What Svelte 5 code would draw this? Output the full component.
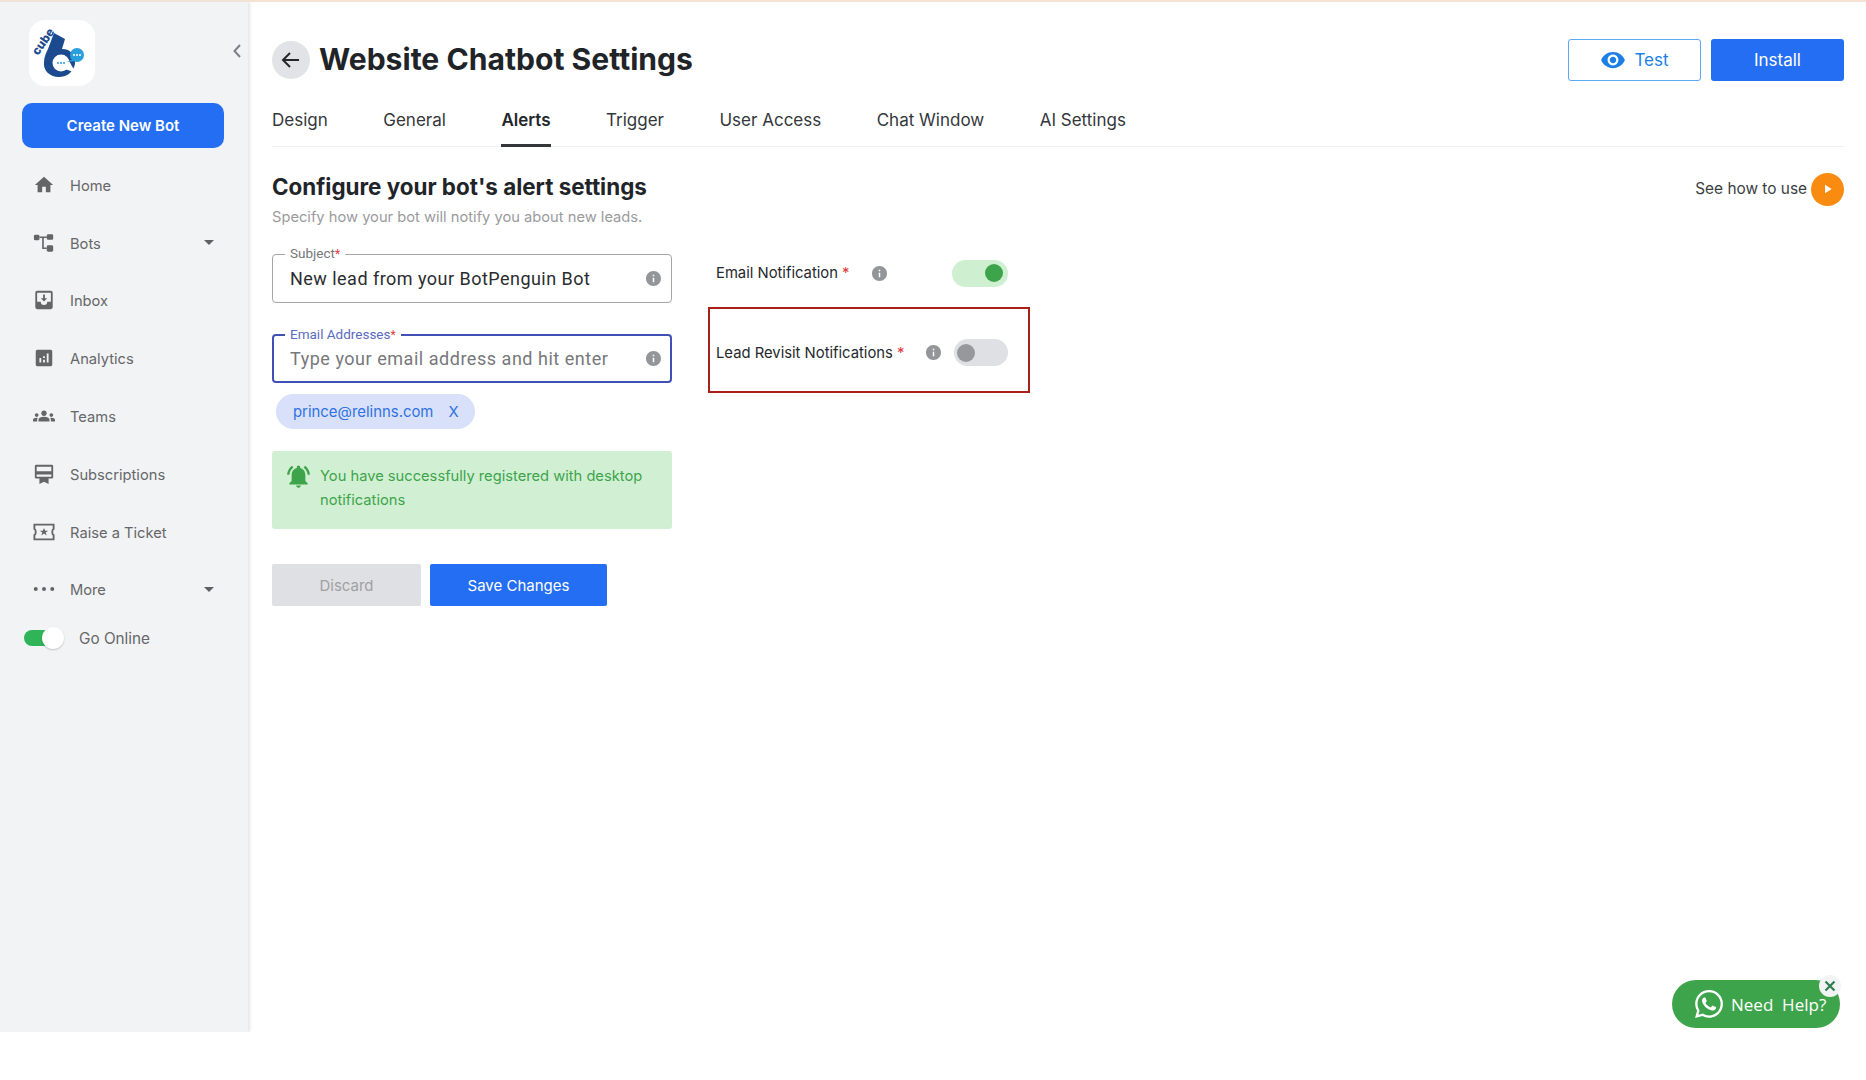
<script>
	const tabs = ["Design", "General", "Alerts", "Trigger", "User Access", "Chat Window", "AI Settings"];
	const infoPath = "M12 2C6.48 2 2 6.48 2 12s4.48 10 10 10 10-4.48 10-10S17.52 2 12 2zm1 15h-2v-6h2v6zm0-8h-2V7h2v2z";
	const navItems = [
		{ label: "Home", icon: "home" },
		{ label: "Bots", icon: "bots", caret: true },
		{ label: "Inbox", icon: "inbox" },
		{ label: "Analytics", icon: "analytics" },
		{ label: "Teams", icon: "teams" },
		{ label: "Subscriptions", icon: "subs" },
		{ label: "Raise a Ticket", icon: "ticket" },
		{ label: "More", icon: "more", caret: true }
	];
</script>

{#snippet info()}
	<svg class="info" viewBox="2 2 20 20"><path d={infoPath} /></svg>
{/snippet}

<div class="topline"></div>
<div class="page">
	<aside class="sidebar">
		<div class="logo-row">
			<div class="logo">
				<svg viewBox="0 0 66 66" width="66" height="66">
					<path d="M25 13 L36 19 L33 29 C43 29 47 37 46 44 C44 53 37 57 30 57 C20 57 14 50 15 42 C15 37 17 33 19 29 Z" fill="#1b4a8f" />
					<text x="9" y="36" transform="rotate(-55 9 36)" class="logo-word">cube</text>
					<circle cx="32" cy="43" r="8.500" fill="#fff" />
					<path d="M36 49 L47 53 L40 41 Z" fill="#fff" />
					<circle cx="48" cy="35" r="7" fill="#2a9fdc" />
					<path d="M44 39 L38 42 L46 41 Z" fill="#2a9fdc" />
					<circle cx="29" cy="43" r="1" fill="#2a9fdc" /><circle cx="32" cy="43" r="1" fill="#2a9fdc" /><circle cx="35" cy="43" r="1" fill="#2a9fdc" />
					<circle cx="45" cy="35" r="1" fill="#fff" /><circle cx="48" cy="35" r="1" fill="#fff" /><circle cx="51" cy="35" r="1" fill="#fff" />
				</svg>
			</div>
			<svg class="collapse" viewBox="0 0 10 16" width="10" height="16"><path d="M8 2 L2.500 8 L8 14" fill="none" stroke="#7c7f84" stroke-width="2" /></svg>
		</div>
		<button class="create">Create New Bot</button>
		<nav>
			{#each navItems as item}
				<div class="nav-item">
					<svg class="nav-icon" viewBox="0 0 24 24" width="24" height="24">
						{#if item.icon === "home"}
							<path d="M10 20v-6h4v6h5v-8h3L12 3 2 12h3v8z" />
						{:else if item.icon === "bots"}
							<rect x="1" y="3" width="6" height="6" rx="1.500" /><rect x="15" y="2.500" width="7" height="6" rx="1.500" /><rect x="15" y="14.500" width="7" height="7" rx="1.500" />
							<path d="M7 5h8v1.500h-3.200V17H15v1.500h-5V6.500H7z" />
						{:else if item.icon === "inbox"}
							<path fill-rule="evenodd" d="M4.500 2h15A2 2 0 0 1 21.500 4v16a2 2 0 0 1-2 2h-15a2 2 0 0 1-2-2V4a2 2 0 0 1 2-2zM4.500 4v10h4a3.500 3.500 0 0 0 7 0h4V4zM11 6h2v4h2.500L12 13.500 8.500 10H11z" />
						{:else if item.icon === "analytics"}
							<path d="M19 3H5c-1.100 0-2 .9-2 2v14c0 1.100.9 2 2 2h14c1.100 0 2-.9 2-2V5c0-1.100-.9-2-2-2zM9 17H7v-5h2v5zm4 0h-2v-3h2v3zm0-5h-2v-2h2v2zm4 5h-2V7h2v10z" />
						{:else if item.icon === "teams"}
							<path d="M12 12.750c1.630 0 3.070.39 4.240.9 1.080.48 1.760 1.560 1.760 2.730V18H6v-1.610c0-1.180.68-2.260 1.760-2.730 1.170-.52 2.610-.91 4.240-.91zM4 13c1.100 0 2-.9 2-2s-.9-2-2-2-2 .9-2 2 .9 2 2 2zm1.130 1.100c-.37-.06-.74-.1-1.130-.1-.99 0-1.930.21-2.780.58C.48 14.900 0 15.620 0 16.430V18h4.500v-1.610c0-.83.23-1.610.63-2.290zM20 13c1.100 0 2-.9 2-2s-.9-2-2-2-2 .9-2 2 .9 2 2 2zm4 3.430c0-.81-.48-1.530-1.220-1.850-.85-.37-1.790-.58-2.780-.58-.39 0-.76.04-1.130.1.4.68.63 1.460.63 2.290V18H24v-1.570zM12 6c1.660 0 3 1.340 3 3s-1.340 3-3 3-3-1.340-3-3 1.340-3 3-3z" />
						{:else if item.icon === "subs"}
							<path fill-rule="evenodd" d="M3.500 2h17A1.500 1.500 0 0 1 22 3.500v12a1.500 1.500 0 0 1-1.500 1.500H17v6l-5-2.500L7 23v-6H3.500A1.500 1.500 0 0 1 2 15.500v-12A1.500 1.500 0 0 1 3.500 2zM4 4v5h16V4zm0 8.500V15h16v-2.500z" />
						{:else if item.icon === "ticket"}
							<path fill="none" stroke="#646567" stroke-width="2" d="M1.500 4h21v4.500c-2 .8-2 6.200 0 7V20h-21v-4.500c2-.8 2-6.200 0-7z" />
							<path d="M12 7.500l1.300 3h3.200l-2.600 2 1 3.200-2.900-2-2.900 2 1-3.200-2.600-2h3.200z" />
						{:else}
							<circle cx="3" cy="12" r="2.200" /><circle cx="12" cy="12" r="2.200" /><circle cx="21" cy="12" r="2.200" />
						{/if}
					</svg>
					<span class="nav-label">{item.label}</span>
					{#if item.caret}<span class="caret"></span>{/if}
				</div>
			{/each}
		</nav>
		<div class="go-online">
			<span class="mini-switch"><span class="mini-knob"></span></span>
			<span class="nav-label">Go Online</span>
		</div>
	</aside>

	<main>
		<header>
			<button class="back" aria-label="Back">
				<svg viewBox="0 0 24 24" width="24" height="24"><path d="M20 12H5M11 5l-7 7 7 7" fill="none" stroke="#23272c" stroke-width="2" /></svg>
			</button>
			<h1>Website Chatbot Settings</h1>
			<div class="actions">
				<button class="test">
					<svg viewBox="0 0 24 24" width="26" height="26"><path d="M12 4.500C7 4.500 2.730 7.610 1 12c1.730 4.390 6 7.500 11 7.500s9.270-3.110 11-7.500c-1.730-4.390-6-7.500-11-7.500zM12 17c-2.760 0-5-2.240-5-5s2.240-5 5-5 5 2.240 5 5-2.240 5-5 5zm0-8c-1.660 0-3 1.340-3 3s1.340 3 3 3 3-1.340 3-3-1.340-3-3-3z" fill="#1c7fe6" /></svg>
					Test
				</button>
				<button class="install">Install</button>
			</div>
		</header>

		<div class="tabs">
			{#each tabs as tab}
				<div class="tab" class:active={tab === "Alerts"}>{tab}</div>
			{/each}
		</div>

		<div class="section-head">
			<div>
				<h2>Configure your bot's alert settings</h2>
				<p class="sub">Specify how your bot will notify you about new leads.</p>
			</div>
			<div class="how">
				<span class="how-text">See how to use</span>
				<span class="play"><svg viewBox="0 0 10 10" width="12" height="12"><path d="M2.500 1.500 L8 5 L2.500 8.500Z" fill="#fff" /></svg></span>
			</div>
		</div>

		<div class="columns">
			<div class="form">
				<fieldset class="field">
					<legend>Subject<em>*</em></legend>
					<span class="value">New lead from your BotPenguin Bot</span>
					{@render info()}
				</fieldset>
				<fieldset class="field focus">
					<legend>Email Addresses<em>*</em></legend>
					<span class="value placeholder">Type your email address and hit enter</span>
					{@render info()}
				</fieldset>
				<div class="chip"><span>prince@relinns.com</span><span>X</span></div>
				<div class="alert">
					<svg viewBox="2 2 20 21" width="23" height="24"><path d="M7.580 4.080L6.150 2.650C3.750 4.480 2.170 7.300 2.030 10.500h2c.15-2.650 1.510-4.970 3.550-6.420zm12.390 6.420h2c-.15-3.200-1.730-6.020-4.120-7.850l-1.420 1.430c2.020 1.450 3.390 3.770 3.540 6.420zM18 11c0-3.070-1.640-5.640-4.500-6.320V4c0-.83-.67-1.500-1.500-1.500s-1.500.67-1.500 1.500v.68C7.630 5.360 6 7.920 6 11v5l-2 2v1h16v-1l-2-2v-5zm-6 11c.14 0 .27-.01.4-.04.65-.14 1.180-.58 1.440-1.180.1-.24.15-.5.15-.78h-4c.01 1.100.9 2 2.010 2z" fill="#3ea44b" /></svg>
					<span>You have successfully registered with desktop notifications</span>
				</div>
				<div class="form-actions">
					<button class="discard">Discard</button>
					<button class="save">Save Changes</button>
				</div>
			</div>

			<div class="notify">
				<div class="notify-row email">
					<span class="notify-label">Email Notification <em>*</em></span>
					{@render info()}
					<span class="toggle on"><span class="knob"></span></span>
				</div>
				<div class="notify-row lead">
					<span class="notify-label">Lead Revisit Notifications <em>*</em></span>
					{@render info()}
					<span class="toggle"><span class="knob"></span></span>
				</div>
			</div>
		</div>
	</main>
</div>

<div class="need-help">
	<svg viewBox="0 0 24 24" width="28" height="28"><path fill="#fff" d="M17.472 14.382c-.297-.149-1.758-.867-2.030-.967-.273-.099-.471-.148-.67.15-.197.297-.767.966-.94 1.164-.173.199-.347.223-.644.075-.297-.15-1.255-.463-2.390-1.475-.883-.788-1.480-1.761-1.653-2.059-.173-.297-.018-.458.13-.606.134-.133.298-.347.446-.52.149-.174.198-.298.298-.497.099-.198.05-.371-.025-.52-.075-.149-.669-1.612-.916-2.207-.242-.579-.487-.5-.669-.51-.173-.008-.371-.01-.57-.01-.198 0-.52.074-.792.372-.272.297-1.040 1.016-1.040 2.479 0 1.462 1.065 2.875 1.213 3.074.149.198 2.096 3.200 5.077 4.487.709.306 1.262.489 1.694.625.712.227 1.360.195 1.871.118.571-.085 1.758-.719 2.006-1.413.248-.694.248-1.289.173-1.413-.074-.124-.272-.198-.57-.347m-5.421 7.403h-.004a9.870 9.870 0 01-5.031-1.378l-.361-.214-3.741.982.998-3.648-.235-.374a9.860 9.860 0 01-1.510-5.260c.001-5.450 4.436-9.884 9.888-9.884 2.640 0 5.122 1.030 6.988 2.898a9.825 9.825 0 012.893 6.994c-.003 5.450-4.437 9.884-9.885 9.884m8.413-18.297A11.815 11.815 0 0012.050 0C5.495 0 .16 5.335.157 11.892c0 2.096.547 4.142 1.588 5.945L.057 24l6.305-1.654a11.882 11.882 0 005.683 1.448h.005c6.554 0 11.890-5.335 11.893-11.893a11.821 11.821 0 00-3.480-8.413z" /></svg>
	<span>Need&nbsp; Help?</span>
	<span class="close"><svg viewBox="0 0 12 12" width="12" height="12"><path d="M1.500 1.500 L10.500 10.500 M10.500 1.500 L1.500 10.500" stroke="#2f7d4f" stroke-width="2.200" /></svg></span>
</div>

<style>
	:global(body) {
		background: #fff;
		font-family: Inter, "Liberation Sans", sans-serif;
		color: #23272c;
	}

	button {
		font-family: inherit;
		border: none;
		cursor: pointer;
	}

	em {
		font-style: normal;
		color: #e0383e;
	}

	.topline {
		height: 2px;
		background: #f5e3d4;
	}

	.page {
		display: flex;
		height: 1030px;
	}

	.sidebar {
		width: 248px;
		flex-shrink: 0;
		background: #f2f3f5;
		box-shadow: 2px 0 3px #e4e5e7;
		padding: 18px 0 0 22px;
		box-sizing: border-box;
	}

	.logo-row {
		display: flex;
		align-items: center;
		padding-left: 7px;
	}

	.logo {
		width: 66px;
		height: 66px;
		background: #fff;
		border-radius: 16px;
	}

	.logo-word {
		font-size: 12px;
		font-weight: 800;
		fill: #1b4a8f;
	}

	.collapse {
		margin-left: 137px;
		margin-bottom: 4px;
	}

	.create {
		display: block;
		width: 202px;
		height: 45px;
		margin-top: 17px;
		background: #236ef2;
		color: #fff;
		border-radius: 10px;
		font-size: 15px;
		font-weight: 600;
	}

	nav {
		margin-top: 9px;
	}

	.nav-item {
		display: flex;
		align-items: center;
		height: 57.800px;
		position: relative;
	}

	.nav-icon {
		width: 22px;
		height: 22px;
		fill: #646567;
		margin: 0 0 2px 11px;
		flex-shrink: 0;
	}

	.nav-label {
		font-size: 14.700px;
		color: #666769;
		margin-left: 15px;
	}

	.caret {
		position: absolute;
		left: 182px;
		top: 25px;
		border: 5px solid transparent;
		border-top: 5px solid #5f6063;
		border-bottom: none;
	}

	.go-online {
		display: flex;
		align-items: center;
		margin-top: 5px;
		height: 28px;
	}

	.mini-switch {
		position: relative;
		width: 38px;
		height: 16px;
		margin-left: 2px;
		background: #2fb457;
		border-radius: 8px;
	}

	.mini-knob {
		position: absolute;
		right: -2px;
		top: -3px;
		width: 22px;
		height: 22px;
		background: #fff;
		border-radius: 50%;
		box-shadow: 0 1px 2px #0003;
	}

	.go-online .nav-label {
		margin-left: 17px;
		font-size: 15.300px;
	}

	main {
		flex: 1;
		min-width: 0;
		padding: 0 22px 0 24px;
	}

	header {
		display: flex;
		align-items: center;
		padding-top: 37px;
		height: 42px;
	}

	.back {
		width: 38px;
		height: 38px;
		border-radius: 50%;
		background: #e2e3e7;
		padding: 0;
		display: flex;
		align-items: center;
		justify-content: center;
	}

	h1 {
		margin: 0 0 3px 9px;
		font-size: 30.100px;
		font-weight: 700;
		color: #1f2429;
		flex: 1;
	}

	.actions {
		display: flex;
		gap: 10px;
	}

	.test,
	.install {
		width: 133px;
		height: 42px;
		border-radius: 3px;
		font-size: 17px;
	}

	.test {
		display: flex;
		align-items: center;
		justify-content: center;
		gap: 8px;
		background: #fff;
		border: 1.500px solid #5ba8f5;
		color: #1c7fe6;
	}

	.install {
		background: #236ef2;
		color: #fff;
	}

	.tabs {
		display: flex;
		gap: 55.500px;
		height: 66px;
		border-bottom: 1px solid #eeeff1;
		box-sizing: border-box;
	}

	.tab {
		height: 66px;
		box-sizing: border-box;
		padding-top: 29px;
		font-size: 17px;
		color: #33373b;
	}

	.tab.active {
		font-weight: 600;
		border-bottom: 3px solid #33373b;
		color: #23272c;
	}

	.section-head {
		display: flex;
		justify-content: space-between;
		margin-top: 26px;
	}

	h2 {
		margin: 0;
		font-size: 22.400px;
		font-weight: 700;
		line-height: 28px;
		color: #1f2429;
	}

	.sub {
		margin: 7px 0 0;
		font-size: 14.700px;
		line-height: 18px;
		color: #9a9b9e;
	}

	.how {
		display: flex;
		align-items: center;
		gap: 4px;
		height: 34px;
		margin-top: -1px;
		font-size: 15.400px;
		color: #3a3e42;
	}

	.how-text {
		margin-bottom: 2px;
	}

	.play {
		width: 33px;
		height: 33px;
		border-radius: 50%;
		background: #f98c10;
		display: flex;
		align-items: center;
		justify-content: center;
	}

	.columns {
		display: flex;
	}

	.form {
		width: 400px;
		margin-top: 21px;
	}

	.field {
		display: flex;
		align-items: center;
		justify-content: space-between;
		width: 400px;
		height: 56px;
		box-sizing: border-box;
		margin: 0 0 25px;
		padding: 0 10px 6px 17px;
		border: 1px solid #a5a6a8;
		border-radius: 4px;
		font-family: Roboto, sans-serif;
	}

	.field legend {
		font-size: 13.500px;
		line-height: 13px;
		padding: 0 5px;
		margin-left: -5px;
		color: #77787b;
	}

	.field legend em {
		font-size: 12px;
	}

	.field.focus {
		border: 2px solid #3f51b5;
		height: 55px;
		margin-bottom: 0;
		padding-left: 16px;
		padding-right: 9px;
	}

	.field.focus legend {
		color: #5a6bc0;
	}

	.value {
		font-size: 18px;
		letter-spacing: 0.470px;
		color: #2a2c2f;
	}

	.placeholder {
		color: #77787b;
		letter-spacing: 0.530px;
	}

	.info {
		width: 15px;
		height: 15px;
		fill: #949598;
		flex-shrink: 0;
	}

	.chip {
		display: inline-flex;
		align-items: center;
		gap: 15px;
		height: 35px;
		margin: 11px 0 0 4px;
		padding: 0 16px 0 17px;
		background: #d9e0f9;
		border-radius: 18px;
		font-size: 14.900px;
		color: #2e73e0;
	}

	.alert {
		display: flex;
		gap: 10px;
		height: 78px;
		box-sizing: border-box;
		margin-top: 22px;
		padding: 13px 15px;
		background: #d1f0d3;
		border-radius: 3px;
		font-size: 14.700px;
		line-height: 24px;
		color: #3ea44b;
	}

	.alert svg {
		flex-shrink: 0;
		margin-top: 1px;
	}

	.form-actions {
		display: flex;
		gap: 9px;
		margin-top: 35px;
	}

	.form-actions button {
		height: 42px;
		border-radius: 2px;
		font-size: 15px;
	}

	.discard {
		width: 149px;
		background: #dfe0e3;
		color: #a0a1a5;
	}

	.save {
		width: 177px;
		background: #236ef2;
		color: #fff;
	}

	.notify {
		margin: 0 0 0 36px;
	}

	.notify-row {
		display: flex;
		align-items: center;
		font-size: 14.800px;
		color: #25282c;
	}

	.notify-row.email {
		height: 26px;
		margin-top: 34px;
		padding-left: 8px;
		width: 299px;
	}

	.notify-row.email .info {
		margin-left: 22px;
	}

	.notify-row.email .toggle {
		margin-left: 65px;
	}

	.notify-row.lead {
		width: 322px;
		height: 86px;
		box-sizing: border-box;
		margin-top: 21px;
		padding: 5px 0 0 6px;
		border: 2.500px solid #a9201b;
	}

	.notify-row.lead .info {
		margin-left: 22px;
	}

	.notify-row.lead .toggle {
		margin-left: 13px;
		width: 54px;
	}

	.notify-row.lead .knob {
		margin-left: -3px;
	}

	.toggle {
		display: flex;
		align-items: center;
		width: 56px;
		height: 27px;
		padding: 0 6px;
		box-sizing: border-box;
		border-radius: 14px;
		background: #dfe0e4;
	}

	.knob {
		width: 18px;
		height: 18px;
		border-radius: 50%;
		background: #97989b;
		margin-left: -2px;
	}

	.toggle.on {
		background: #cff0d0;
		justify-content: flex-end;
	}

	.toggle.on .knob {
		background: #3ea44b;
		margin-left: 0;
		margin-right: -1px;
	}

	.need-help {
		position: absolute;
		left: 1672px;
		top: 980px;
		width: 168px;
		height: 48px;
		box-sizing: border-box;
		padding-left: 23px;
		display: flex;
		align-items: center;
		gap: 8px;
		background: #3ea44b;
		border-radius: 24px;
		font-family: "Open Sans", sans-serif;
		font-size: 17px;
		font-weight: 500;
		color: #fff;
	}

	.close {
		position: absolute;
		right: -1px;
		top: -5px;
		width: 22px;
		height: 22px;
		border-radius: 50%;
		background: #f2f4f4;
		display: flex;
		align-items: center;
		justify-content: center;
	}
</style>
